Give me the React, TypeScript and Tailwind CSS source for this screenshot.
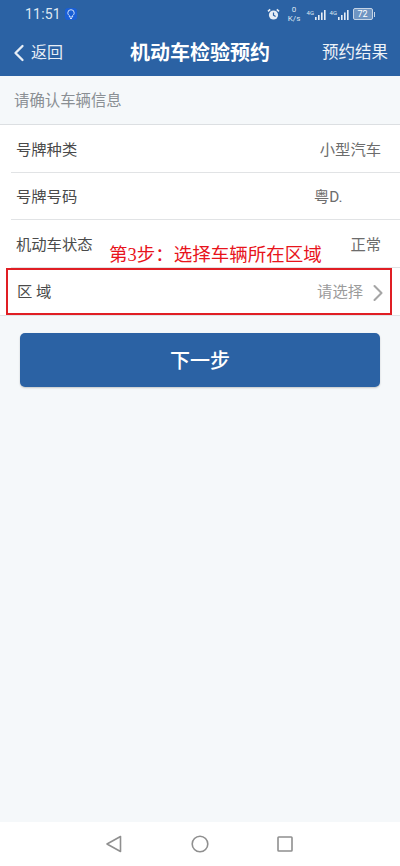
import { ChevronLeft, ChevronRight } from "lucide-react";

const FONT = "font-['Roboto','Noto_Sans_CJK_SC',sans-serif]";

const rows = [
  { label: "号牌种类", value: "小型汽车" },
  { label: "号牌号码", value: "粤D." },
  { label: "机动车状态", value: "正常" },
];

const StatusIcons = () => (
  <div className="flex items-center text-white/80">
    {/* alarm */}
    <svg width="13" height="13" viewBox="0 0 13 13" className="mr-[8px]">
      <circle cx="6.5" cy="7" r="4.6" fill="#e6edf5" />
      <path d="M6.5 4.5V7.2L8.6 8.6" stroke="#2b62a4" strokeWidth="1.2" fill="none" />
      <path d="M1 3.4 3.2 1.3M12 3.4 9.8 1.3" stroke="#e6edf5" strokeWidth="1.6" />
    </svg>
    <div className="mr-[6px] flex w-[13px] flex-col items-center text-[8px] leading-[9px] text-[#dfe8f2]">
      <span>0</span>
      <span>K/s</span>
    </div>
    <Signal />
    <div className="w-[3px]" />
    <Signal />
    {/* battery */}
    <div className="ml-[3px] flex h-[12px] w-[20px] items-center justify-center rounded-[2px] border border-[#c5d4e6] bg-[#6f95c2] text-[9px] leading-none text-white">
      72
    </div>
    <div className="ml-[1px] h-[5px] w-[1.5px] bg-[#c5d4e6]" />
  </div>
);

const Signal = () => (
  <div className="flex items-start">
    <span className="text-[6px] leading-[7px] text-[#dfe8f2]">4G</span>
    <svg width="12" height="11" viewBox="0 0 12 11" className="ml-[0.5px]">
      <rect x="0" y="8" width="1.6" height="3" fill="#e6edf5" />
      <rect x="3" y="6" width="1.6" height="5" fill="#e6edf5" />
      <rect x="6" y="3.5" width="1.6" height="7.5" fill="#e6edf5" />
      <rect x="9" y="1" width="1.6" height="10" fill="#e6edf5" />
    </svg>
  </div>
);

export default function App() {
  return (
    <div className={`flex h-[866px] w-[400px] flex-col overflow-hidden bg-[#f5f8fa] ${FONT}`}>
      {/* top bar */}
      <div className="h-[76px] shrink-0 bg-[#2b62a4]">
        <div className="flex h-[28px] items-center justify-between pl-[25px] pr-[25px]">
          <div className="flex items-center">
            <span className="text-[14px] leading-none tracking-[0.2px] text-[#dfe8f2]">11:51</span>
            <div className="ml-[4px] flex h-[12px] w-[12px] items-center justify-center rounded-[3px] bg-[#1a5fd6]">
              <svg width="8" height="10" viewBox="0 0 8 10" fill="none" stroke="#cfe0fb" strokeWidth="1">
                <path d="M2.4 6.6C1.4 5.9.8 5 .8 3.9a3.2 3.2 0 0 1 6.4 0c0 1.1-.6 2-1.6 2.7V8H2.4Z" />
                <path d="M3 9.5h2" />
              </svg>
            </div>
          </div>
          <StatusIcons />
        </div>
        <div className="relative flex h-[48px] items-center justify-between pl-[5px] pr-[12px] pt-[2px] text-white">
          <div className="flex items-center">
            <ChevronLeft size={28} strokeWidth={2} className="text-[#e8eef6]" />
            <span className="-ml-[2px] text-[16px] text-[#e8eef6]">返回</span>
          </div>
          <span className="absolute left-0 right-0 text-center text-[20px] font-bold">机动车检验预约</span>
          <span className="text-[16.5px] text-[#eef3f8]">预约结果</span>
        </div>
      </div>

      {/* section label */}
      <div className="flex h-[49px] shrink-0 items-center border-b border-[#dcdfe2] pl-[14px] pt-[4px] text-[15.4px] text-[#8a8f94]">
        请确认车辆信息
      </div>

      {/* rows */}
      <div className="relative bg-white text-[15.3px] text-[#4a4a4a]">
        {rows.map((row) => (
          <div key={row.label} className="ml-[11px] flex h-[47.5px] items-center justify-between border-b border-[#e1e3e5] pl-[5px] pr-[19px] pt-[4px]">
            <span>{row.label}</span>
            <span className={row.value === "粤D." ? "w-[67px] text-[#6c6c6c]" : "text-[#6c6c6c]"}>{row.value}</span>
          </div>
        ))}
        <div className="flex h-[48px] items-center justify-between border-b border-[#e1e3e5] pl-[17px] pr-[12px] pt-[3px]">
          <span>区 域</span>
          <div className="flex items-center text-[#9b9b9b]">
            <span>请选择</span>
            <ChevronRight size={28} strokeWidth={1.8} className="-mr-[4px] ml-[1px] text-[#a5a5a5]" />
          </div>
        </div>

        {/* annotation */}
        <span className="absolute left-[109px] top-[119px] font-['Liberation_Serif','Noto_Sans_CJK_SC',serif] text-[18.5px] leading-[22px] text-[#e8141c]">
          第3步：选择车辆所在区域
        </span>
        <div className="absolute left-[6px] top-[143px] h-[47px] w-[386px] border-2 border-[#e01e24]" />
      </div>

      {/* next button */}
      <div className="px-[20px] pt-[17px]">
        <div className="flex h-[54px] items-center justify-center rounded-[5px] bg-[#2b62a4] pt-[2px] text-[20px] font-medium text-white shadow-[0_1px_2px_rgba(0,0,0,0.2)]">
          下一步
        </div>
      </div>

      <div className="flex-1" />

      {/* android nav bar */}
      <div className="flex h-[44px] shrink-0 items-center justify-center gap-[68px] bg-white pb-[1px] pr-[2px]">
        <svg width="18" height="18" viewBox="0 0 18 18" fill="none" stroke="#8f8f8f" strokeWidth="1.6" strokeLinejoin="round">
          <path d="M15.5 1.5V16.5L2 9Z" />
        </svg>
        <svg width="18" height="18" viewBox="0 0 18 18" fill="none" stroke="#8f8f8f" strokeWidth="1.6">
          <circle cx="9" cy="9" r="7.8" />
        </svg>
        <svg width="16" height="16" viewBox="0 0 16 16" fill="none" stroke="#8f8f8f" strokeWidth="1.6" strokeLinejoin="round">
          <rect x="1" y="1" width="14" height="14" rx="0.8" />
        </svg>
      </div>
    </div>
  );
}
